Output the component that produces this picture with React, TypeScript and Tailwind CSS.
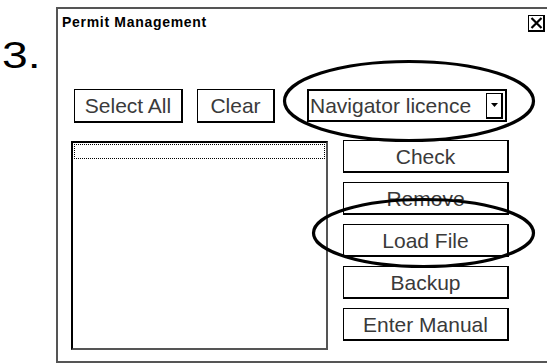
import React from "react";

const font = "font-['Liberation_Sans',Arial,sans-serif]";

function Btn({ label, className }: { label: string; className: string }) {
  return (
    <div
      className={`box-border flex items-center justify-center border border-black border-r-2 border-b-2 bg-white text-[21px] leading-none text-[#3a3a3a] ${className}`}
    >
      {label}
    </div>
  );
}

export default function App() {
  return (
    <div className={`relative w-[547px] h-[364px] overflow-hidden bg-white flex ${font}`}>
      <div className="w-[56px] shrink-0 pl-[2px]">
        <div className="mt-[37px] text-[37px] leading-[37px] text-black origin-left scale-x-125">3.</div>
      </div>

      <div className="mt-[7px] w-[520px] h-[356px] shrink-0 border-2 border-[#555] bg-white flex flex-col">
        <div className="flex items-start justify-between pt-[5px] pl-[4px] pr-[29px]">
          <div className="text-[14px] leading-[16px] font-bold tracking-[0.7px] text-black">Permit Management</div>
          <div className="mt-[1px] w-[17px] h-[17px] box-border border border-black border-r-2 border-b-2 flex items-center justify-center">
            <svg width="13" height="12" viewBox="0 0 13 12">
              <path d="M1.5 1 L11.5 11 M11.5 1 L1.5 11" stroke="black" strokeWidth="2.2" />
            </svg>
          </div>
        </div>

        <div className="mt-[57px] ml-[16px] flex items-start">
          <Btn label="Select All" className="w-[109px] h-[34px]" />
          <Btn label="Clear" className="ml-[14px] w-[78px] h-[34px]" />
          <div className="ml-[32px] w-[200px] h-[33px] box-border border-2 border-black flex items-center justify-between">
            <span className="pl-[1px] text-[21px] leading-none text-[#3a3a3a]">Navigator licence</span>
            <div className="mr-[2px] w-[17px] h-[26px] box-border border border-black border-r-2 border-b-2 flex items-center justify-center">
              <svg width="7" height="4" viewBox="0 0 7 4">
                <path d="M0 0 L7 0 L3.5 4 Z" fill="black" />
              </svg>
            </div>
          </div>
        </div>

        <div className="mt-[18px] ml-[13px] flex items-start">
          <div className="w-[257px] h-[209px] box-border border-2 border-[#555] border-l-black border-t-black bg-white">
            <div className="mt-[1px] mx-[1px] h-[15px] border border-dotted border-black" />
          </div>
          <div className="ml-[15px] -mt-[1px] flex flex-col gap-[9px]">
            <Btn label="Check" className="w-[166px] h-[33px]" />
            <Btn label="Remove" className="w-[166px] h-[33px]" />
            <Btn label="Load File" className="w-[166px] h-[33px]" />
            <Btn label="Backup" className="w-[166px] h-[33px]" />
            <Btn label="Enter Manual" className="w-[166px] h-[33px]" />
          </div>
        </div>
      </div>

      <svg className="absolute left-0 top-0 pointer-events-none" width="547" height="364" viewBox="0 0 547 364">
        <ellipse cx="409" cy="101" rx="124.5" ry="39.5" fill="none" stroke="black" strokeWidth="3.2" />
        <ellipse cx="423.5" cy="233" rx="110" ry="33.5" fill="none" stroke="black" strokeWidth="3.2" />
      </svg>
    </div>
  );
}
